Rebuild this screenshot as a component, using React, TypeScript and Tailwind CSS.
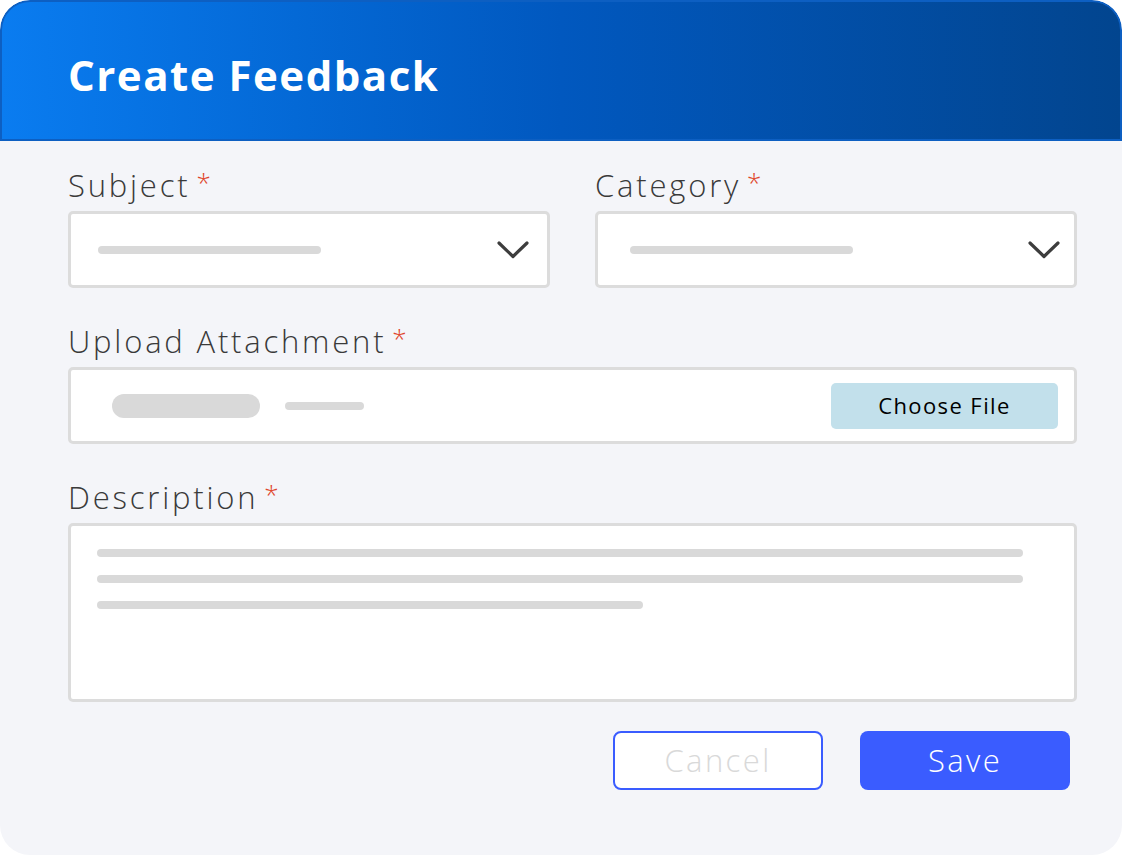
import React from "react";

const font = { fontFamily: "'Open Sans', 'Noto Sans', sans-serif" };

function Chevron() {
  return (
    <svg width="32" height="18" viewBox="0 0 32 18" fill="none">
      <polyline
        points="2,2 16,15.5 30,2"
        stroke="#3d3d3d"
        strokeWidth="3.2"
        strokeLinecap="round"
        strokeLinejoin="round"
      />
    </svg>
  );
}

function Label({ children }: { children: React.ReactNode }) {
  return (
    <div className="h-[36px] mb-[8px] text-[31px] leading-[36px] text-[#3a3a3a] font-light tracking-[2.8px] whitespace-nowrap flex items-start">
      <span>{children}</span>
      <span className="ml-[6px] text-[26px] leading-[30px] tracking-normal text-[#e0452b]">*</span>
    </div>
  );
}

export default function App() {
  return (
    <div className="min-h-screen bg-white" style={font}>
      <div className="w-[1122px] h-[855px] rounded-[30px] bg-[#f4f5f9] overflow-hidden flex flex-col">
        <header className="h-[141px] shrink-0 rounded-t-[30px] border-2 border-[#0d5fc2] bg-gradient-to-r from-[#0a7cf0] via-[#0158bf] to-[#02458f] pl-[66px] pt-[47px]">
          <h1 className="text-[42px] leading-[52px] font-bold text-white tracking-[1.5px]">
            Create Feedback
          </h1>
        </header>

        <div className="pl-[68px] pr-[45px] pt-[26px] flex flex-col">
          <div className="grid grid-cols-2 gap-x-[45px]">
            <div>
              <Label>Subject</Label>
              <div className="h-[77px] bg-white border-[3px] border-[#dcdcdc] rounded-[5px] flex items-center pl-[27px] pr-[18px]">
                <div className="w-[223px] h-[8px] rounded-full bg-[#d9d9d9]" />
                <div className="ml-auto">
                  <Chevron />
                </div>
              </div>
            </div>
            <div>
              <Label>Category</Label>
              <div className="h-[77px] bg-white border-[3px] border-[#dcdcdc] rounded-[5px] flex items-center pl-[32px] pr-[14px]">
                <div className="w-[223px] h-[8px] rounded-full bg-[#d9d9d9]" />
                <div className="ml-auto">
                  <Chevron />
                </div>
              </div>
            </div>
          </div>

          <div className="mt-[35px]">
            <Label>Upload Attachment</Label>
            <div className="h-[77px] bg-white border-[3px] border-[#dcdcdc] rounded-[5px] flex items-center pl-[41px] pr-[16px]">
              <div className="w-[148px] h-[24px] rounded-full bg-[#d9d9d9]" />
              <div className="ml-[25px] w-[79px] h-[8px] rounded-full bg-[#d9d9d9]" />
              <button className="ml-auto w-[227px] h-[46px] rounded-[5px] bg-[#c2e0eb] text-[22px] tracking-[1.4px] text-black">
                Choose File
              </button>
            </div>
          </div>

          <div className="mt-[35px]">
            <Label>Description</Label>
            <div className="h-[179px] bg-white border-[3px] border-[#dcdcdc] rounded-[5px] pl-[26px] pt-[23px] flex flex-col gap-[18px]">
              <div className="w-[926px] h-[8px] rounded-full bg-[#d9d9d9]" />
              <div className="w-[926px] h-[8px] rounded-full bg-[#d9d9d9]" />
              <div className="w-[546px] h-[8px] rounded-full bg-[#d9d9d9]" />
            </div>
          </div>

          <div className="mt-[29px] pr-[7px] flex justify-end gap-[37px]">
            <button className="w-[210px] h-[59px] rounded-[8px] border-2 border-[#3a5cff] bg-white text-[31px] font-light tracking-[2.4px] text-[#d9d9d9]">
              Cancel
            </button>
            <button className="w-[210px] h-[59px] rounded-[8px] bg-[#3a5cff] text-[31px] font-light tracking-[2.4px] text-white">
              Save
            </button>
          </div>
        </div>
      </div>
    </div>
  );
}
